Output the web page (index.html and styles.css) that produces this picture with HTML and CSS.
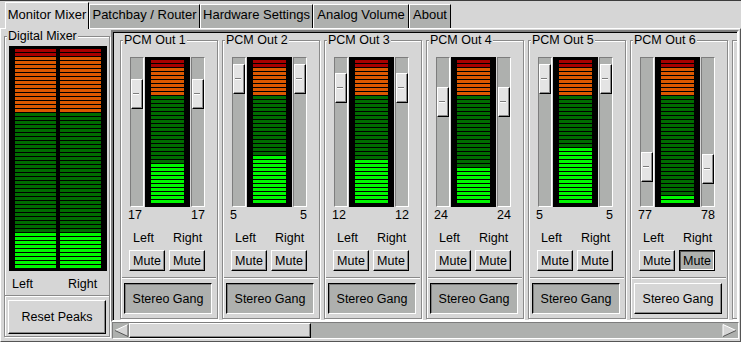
FILE: index.html
```html
<!DOCTYPE html>
<html lang="en">
<head>
    <meta charset="UTF-8">
    <meta name="viewport" content="width=device-width, initial-scale=1.0">
    <title>Monitor Mixer</title>
    <link rel="stylesheet" href="styles.css">
</head>
<body>
<div class="window">
    <!-- Notebook tabs -->
    <div class="tabs">
        <div class="tab active" style="width:84px">Monitor Mixer</div>
        <div class="tab" style="width:111px">Patchbay / Router</div>
        <div class="tab" style="width:113px">Hardware Settings</div>
        <div class="tab" style="width:96px">Analog Volume</div>
        <div class="tab" style="width:42px">About</div>
    </div>

    <div class="page">
        <!-- Digital mixer -->
        <div class="frame digital">
            <span class="frame-label">Digital Mixer</span>
            <div class="meter big">
                <div class="bars"><div class="lit" style="height:36px"></div></div>
                <div class="bars"><div class="lit" style="height:36px"></div></div>
            </div>
            <div class="lr"><span>Left</span><span>Right</span></div>
            <div class="sep"></div>
            <button class="btn reset">Reset Peaks</button>
        </div>

        <!-- PCM outputs -->
        <div class="scroller">
            <div class="viewport">
                <div class="strip">
                    <div class="frame channel">
                        <span class="frame-label">PCM Out 1</span>
                        <div class="faders">
                            <div class="trough"><div class="knob" style="top:21px"></div></div>
                            <div class="meter small"><div class="bars"><div class="lit" style="height:40px"></div></div></div>
                            <div class="trough"><div class="knob" style="top:21px"></div></div>
                        </div>
                        <div class="values"><span>17</span><span>17</span></div>
                        <div class="lr"><span>Left</span><span>Right</span></div>
                        <div class="mutes"><button class="btn mute">Mute</button><button class="btn mute">Mute</button></div>
                        <div class="sep"></div>
                        <button class="btn gang on">Stereo Gang</button>
                    </div>

                    <div class="frame channel">
                        <span class="frame-label">PCM Out 2</span>
                        <div class="faders">
                            <div class="trough"><div class="knob" style="top:6px"></div></div>
                            <div class="meter small"><div class="bars"><div class="lit" style="height:48px"></div></div></div>
                            <div class="trough"><div class="knob" style="top:6px"></div></div>
                        </div>
                        <div class="values"><span>5</span><span>5</span></div>
                        <div class="lr"><span>Left</span><span>Right</span></div>
                        <div class="mutes"><button class="btn mute">Mute</button><button class="btn mute">Mute</button></div>
                        <div class="sep"></div>
                        <button class="btn gang on">Stereo Gang</button>
                    </div>

                    <div class="frame channel">
                        <span class="frame-label">PCM Out 3</span>
                        <div class="faders">
                            <div class="trough"><div class="knob" style="top:15px"></div></div>
                            <div class="meter small"><div class="bars"><div class="lit" style="height:44px"></div></div></div>
                            <div class="trough"><div class="knob" style="top:15px"></div></div>
                        </div>
                        <div class="values"><span>12</span><span>12</span></div>
                        <div class="lr"><span>Left</span><span>Right</span></div>
                        <div class="mutes"><button class="btn mute">Mute</button><button class="btn mute">Mute</button></div>
                        <div class="sep"></div>
                        <button class="btn gang on">Stereo Gang</button>
                    </div>

                    <div class="frame channel">
                        <span class="frame-label">PCM Out 4</span>
                        <div class="faders">
                            <div class="trough"><div class="knob" style="top:29px"></div></div>
                            <div class="meter small"><div class="bars"><div class="lit" style="height:36px"></div></div></div>
                            <div class="trough"><div class="knob" style="top:29px"></div></div>
                        </div>
                        <div class="values"><span>24</span><span>24</span></div>
                        <div class="lr"><span>Left</span><span>Right</span></div>
                        <div class="mutes"><button class="btn mute">Mute</button><button class="btn mute">Mute</button></div>
                        <div class="sep"></div>
                        <button class="btn gang on">Stereo Gang</button>
                    </div>

                    <div class="frame channel">
                        <span class="frame-label">PCM Out 5</span>
                        <div class="faders">
                            <div class="trough"><div class="knob" style="top:6px"></div></div>
                            <div class="meter small"><div class="bars"><div class="lit" style="height:56px"></div></div></div>
                            <div class="trough"><div class="knob" style="top:6px"></div></div>
                        </div>
                        <div class="values"><span>5</span><span>5</span></div>
                        <div class="lr"><span>Left</span><span>Right</span></div>
                        <div class="mutes"><button class="btn mute">Mute</button><button class="btn mute">Mute</button></div>
                        <div class="sep"></div>
                        <button class="btn gang on">Stereo Gang</button>
                    </div>

                    <div class="frame channel">
                        <span class="frame-label">PCM Out 6</span>
                        <div class="faders">
                            <div class="trough"><div class="knob" style="top:94px"></div></div>
                            <div class="meter small"><div class="bars"><div class="lit" style="height:8px"></div></div></div>
                            <div class="trough"><div class="knob" style="top:96px"></div></div>
                        </div>
                        <div class="values"><span>77</span><span>78</span></div>
                        <div class="lr"><span>Left</span><span>Right</span></div>
                        <div class="mutes"><button class="btn mute">Mute</button><button class="btn mute on focus">Mute</button></div>
                        <div class="sep"></div>
                        <button class="btn gang">Stereo Gang</button>
                    </div>

                    <!-- next strip, only its edge is scrolled into view -->
                    <div class="frame channel stub"></div>
                </div>
            </div>

            <!-- Horizontal scrollbar -->
            <div class="hscroll">
                <svg class="arrow" width="15" height="13" viewBox="0 0 15 13">
                    <polygon points="1,6.5 14,0.5 14,12.5" fill="#d6d6d6"/>
                    <polyline points="14,0.5 1,6.5" fill="none" stroke="#fff"/>
                    <polyline points="1,6.5 14,12.5 14,0.5" fill="none" stroke="#555"/>
                </svg>
                <div class="thumb"></div>
                <div class="track"></div>
                <svg class="arrow" width="15" height="13" viewBox="0 0 15 13">
                    <polygon points="14,6.5 1,0.5 1,12.5" fill="#d6d6d6"/>
                    <polyline points="1,12.5 1,0.5 14,6.5" fill="none" stroke="#fff"/>
                    <polyline points="14,6.5 1,12.5" fill="none" stroke="#555"/>
                </svg>
            </div>
        </div>
    </div>
</div>
</body>
</html>
```

FILE: styles.css
```css
body {
    margin: 0;
    background: #d6d6d6;
    font-family: "Liberation Sans", Arial, sans-serif;
    font-size: 12.5px;
    line-height: 14px;
    color: #000;
}
.window {
    width: 741px;
    height: 342px;
    box-sizing: border-box;
    border-top: 1px solid #3c3c3c;
    overflow: hidden;
}

/* Tabs */
.tabs {
    display: flex;
    align-items: flex-end;
    height: 27px;
    padding-left: 5px;
}
.tab {
    box-sizing: border-box;
    height: 24px;
    padding-top: 3px;
    font-size: 13px;
    text-align: center;
    white-space: nowrap;
    background: #aeb0ae;
    border: 1px solid;
    border-bottom: 0;
    border-color: #fff #000 #fff #fff;
}
.tab.active {
    height: 27px;
    padding-top: 5px;
    margin-bottom: -1px;
    background: #d6d6d6;
    position: relative;
    z-index: 1;
}

/* Notebook page */
.page {
    box-sizing: border-box;
    height: 314px;
    display: flex;
    align-items: flex-start;
    border: 1px solid;
    border-color: #fff #555 #555 #fff;
}

/* Etched frames */
.frame {
    position: relative;
    box-sizing: border-box;
    border: 1px solid #8a8a8a;
    box-shadow: inset 1px 1px 0 #fff, 1px 1px 0 #fff;
}
.frame-label {
    position: absolute;
    top: -8px;
    left: 2px;
    padding: 0 1px;
    background: #d6d6d6;
    white-space: nowrap;
}
.digital {
    width: 106px;
    margin: 7px 0 0 3px;
    padding: 9px 2px 2px;
}
.channel {
    flex: none;
    width: 98px;
    padding: 16px 2px 4px;
}
.channel.stub {
    height: 279px;
}

/* Meters */
.meter {
    box-sizing: border-box;
    display: flex;
    gap: 4px;
    background: #000;
}
.meter.big {
    width: 98px;
    height: 225px;
    margin-left: 2px;
    padding: 3px 6px 2px;
}
.meter.small {
    width: 45px;
    height: 150px;
    padding: 3px 6px;
}
.bars {
    flex: 1;
    position: relative;
    background:
        repeating-linear-gradient(to bottom, transparent 0 3px, #000 3px 4px),
        linear-gradient(to bottom, #a80000 0 8px, #dc5800 8px 36px, #006c00 36px);
}
.big .bars {
    background:
        repeating-linear-gradient(to bottom, transparent 0 3px, #000 3px 4px),
        linear-gradient(to bottom, #a80000 0 8px, #dc5800 8px 64px, #006c00 64px);
}
.lit {
    position: absolute;
    left: 0;
    right: 0;
    bottom: 0;
    background:
        repeating-linear-gradient(to bottom, transparent 0 3px, #000 3px 4px),
        #00f800;
}

/* Faders */
.faders {
    display: flex;
    gap: 1px;
    margin-left: 7px;
}
.trough {
    position: relative;
    box-sizing: border-box;
    width: 14px;
    height: 150px;
    background: #aeb0ae;
    border: 1px solid;
    border-color: #7d7d7d #fff #fff #7d7d7d;
}
.knob {
    position: absolute;
    left: 0;
    width: 12px;
    height: 30px;
    box-sizing: border-box;
    background: #e4e4e4;
    border: 1px solid;
    border-color: #fff #000 #000 #fff;
    box-shadow: inset -1px -1px 0 #8a8a8a;
}
.knob::after {
    content: "";
    position: absolute;
    left: 1px;
    top: 13px;
    width: 6px;
    height: 1px;
    background: #7d7d7d;
    box-shadow: 0 1px 0 #fff;
}

.values {
    display: flex;
    justify-content: space-between;
    width: 77px;
    margin: 1px 0 0 5px;
}
.lr {
    margin: 9px 0 0 10px;
    white-space: nowrap;
}
.lr span {
    display: inline-block;
    width: 40px;
}
.digital .lr {
    margin: 6px 0 0 5px;
}
.digital .lr span {
    width: 56px;
}
.sep {
    height: 0;
    margin: 6px -1px 0;
    border-top: 1px solid #8a8a8a;
    border-bottom: 1px solid #fff;
}
.digital .sep {
    margin: 4px -2px 0;
}

/* Buttons */
.btn {
    display: block;
    box-sizing: border-box;
    padding: 0;
    font: inherit;
    color: #000;
    background: #d6d6d6;
    border: 1px solid;
    border-color: #fff #000 #000 #fff;
    box-shadow: inset -1px -1px 0 #8a8a8a;
}
.btn.on {
    background: #aeb0ae;
    border-color: #000 #fff #fff #000;
    box-shadow: inset 1px 1px 0 #7d7d7d;
}
.btn.focus {
    border-color: #000;
    box-shadow: inset 1px 1px 0 #555, inset -1px -1px 0 #fff;
}
.mutes {
    display: flex;
    gap: 4px;
    margin: 5px 0 0 6px;
}
.mute {
    width: 36px;
    height: 21px;
}
.gang {
    width: 88px;
    height: 31px;
    margin: 4px 0 0 1px;
}
.reset {
    width: 98px;
    height: 34px;
    margin: 3px 0 0 1px;
}

/* Scrolled window */
.scroller {
    width: 628px;
    margin: 1px 0 0 1px;
}
.viewport {
    box-sizing: border-box;
    height: 292px;
    overflow: hidden;
    border: 2px solid;
    border-color: #7d7d7d #fff #fff #7d7d7d;
    box-shadow: inset 1px 1px 0 #000;
}
.strip {
    display: flex;
    gap: 4px;
    padding: 8px 0 0 7px;
}
.hscroll {
    box-sizing: border-box;
    display: flex;
    align-items: center;
    height: 17px;
    margin-left: 1px;
    padding: 0 1px;
    background: #aeb0ae;
    border: 1px solid;
    border-color: #7d7d7d #fff #fff #7d7d7d;
}
.arrow {
    flex: none;
}
.thumb {
    box-sizing: border-box;
    width: 182px;
    height: 15px;
    background: #d6d6d6;
    border: 1px solid;
    border-color: #fff #000 #000 #fff;
    box-shadow: inset -1px -1px 0 #8a8a8a;
}
.track {
    flex: 1;
}
```
